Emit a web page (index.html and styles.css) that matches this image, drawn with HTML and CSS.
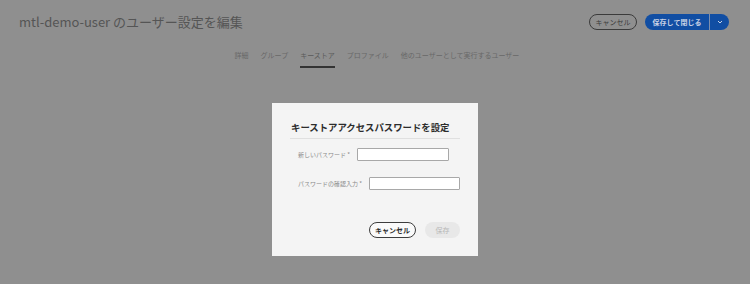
FILE: index.html
```html
<!DOCTYPE html>
<html lang="ja">
<head>
  <meta charset="UTF-8">
  <meta name="viewport" content="width=device-width, initial-scale=1.0">
  <title>mtl-demo-user のユーザー設定を編集</title>
  <link rel="stylesheet" href="styles.css">
</head>
<body>
  <div class="page">
    <div class="header">
      <h1>mtl-demo-user のユーザー設定を編集</h1>
      <div class="actions">
        <button class="btn-outline">キャンセル</button>
        <div class="split">
          <button class="btn-primary">保存して閉じる</button>
          <button class="btn-primary btn-more">
            <svg width="6" height="4" viewBox="0 0 6 4"><path d="M1 1l2 2 2-2" fill="none" stroke="#c9d3e6" stroke-width="1"/></svg>
          </button>
        </div>
      </div>
    </div>

    <div class="tabs">
      <span class="tab">詳細</span>
      <span class="tab">グループ</span>
      <span class="tab active">キーストア</span>
      <span class="tab">プロファイル</span>
      <span class="tab">他のユーザーとして実行するユーザー</span>
    </div>
  </div>

  <div class="overlay">
    <div class="dialog">
      <h2>キーストアアクセスパスワードを設定</h2>
      <div class="form-row">
        <label for="newPassword">新しいパスワード *</label>
        <input type="password" id="newPassword" class="w91">
      </div>
      <div class="form-row">
        <label for="confirmPassword">パスワードの確認入力 *</label>
        <input type="password" id="confirmPassword" class="w90">
      </div>
      <div class="dialog-buttons">
        <button class="btn-cancel">キャンセル</button>
        <button class="btn-save" disabled>保存</button>
      </div>
    </div>
  </div>
</body>
</html>
```

FILE: styles.css
```css
body {
  margin: 0;
  background-color: #8f8f8f;
  font-family: "Noto Sans CJK JP", "Noto Sans", sans-serif;
}
.header {
  display: flex;
  justify-content: space-between;
  align-items: center;
  padding: 14px 21px 0 19px;
}
h1 {
  margin: 0;
  font-size: 13px;
  font-weight: normal;
  line-height: 16px;
  color: #555;
}
.actions {
  display: flex;
  gap: 8px;
}
button {
  font-family: inherit;
  cursor: pointer;
}
.btn-outline {
  height: 16px;
  width: 48px;
  padding: 0;
  border: 1.5px solid #3b3b3b;
  border-radius: 8px;
  background: transparent;
  color: #3b3b3b;
  font-size: 7px;
}
.split {
  display: flex;
}
.btn-primary {
  height: 16px;
  width: 64px;
  padding: 0;
  border: none;
  border-radius: 8px 0 0 8px;
  background-color: #114ea3;
  color: #c9d3e6;
  font-size: 7px;
  font-weight: bold;
}
.btn-more {
  width: 20px;
  border-radius: 0 8px 8px 0;
  border-left: 1px solid #7d8fae;
  display: flex;
  align-items: center;
  justify-content: center;
}
.tabs {
  display: flex;
  justify-content: center;
  gap: 12px;
  margin-top: 18px;
  padding-left: 4px;
}
.tab {
  font-size: 7px;
  line-height: 14px;
  color: #686868;
  padding-bottom: 4px;
  border-bottom: 2px solid transparent;
}
.tab.active {
  color: #5a5a5a;
  border-bottom-color: #333;
}
.overlay {
  padding-top: 35px;
}
.dialog {
  width: 206px;
  margin: 0 auto;
  box-sizing: border-box;
  padding: 0 18px 18px 18px;
  background-color: #f4f4f4;
}
h2 {
  margin: 0;
  padding: 17px 0 4px 1px;
  font-size: 9.4px;
  line-height: 14px;
  color: #2c2c2c;
  border-bottom: 1px solid #e0e0e0;
}
.form-row {
  display: flex;
  align-items: center;
  padding-left: 8px;
  margin-top: 9px;
}
.form-row + .form-row {
  margin-top: 16px;
}
label {
  flex-shrink: 0;
  white-space: nowrap;
  font-size: 6px;
  color: #8a8a8a;
  margin-right: 7px;
}
input[type="password"] {
  flex-shrink: 0;
  box-sizing: border-box;
  height: 13px;
  border: 1px solid #a8a8a8;
  border-radius: 1px;
  background: #fff;
  padding: 0 3px;
}
.w91 {
  width: 92px;
}
.w90 {
  width: 91px;
}
.dialog-buttons {
  display: flex;
  justify-content: flex-end;
  gap: 9px;
  margin-top: 32px;
}
.btn-cancel {
  height: 16px;
  width: 47px;
  padding: 0;
  border: 1.5px solid #3d3d3d;
  border-radius: 8px;
  background: #fafafa;
  color: #2c2c2c;
  font-size: 7px;
  font-weight: bold;
}
.btn-save {
  height: 16px;
  width: 35px;
  padding: 0;
  border: none;
  border-radius: 8px;
  background: #e8e8e8;
  color: #b8b8b8;
  font-size: 7px;
  cursor: default;
}
```
